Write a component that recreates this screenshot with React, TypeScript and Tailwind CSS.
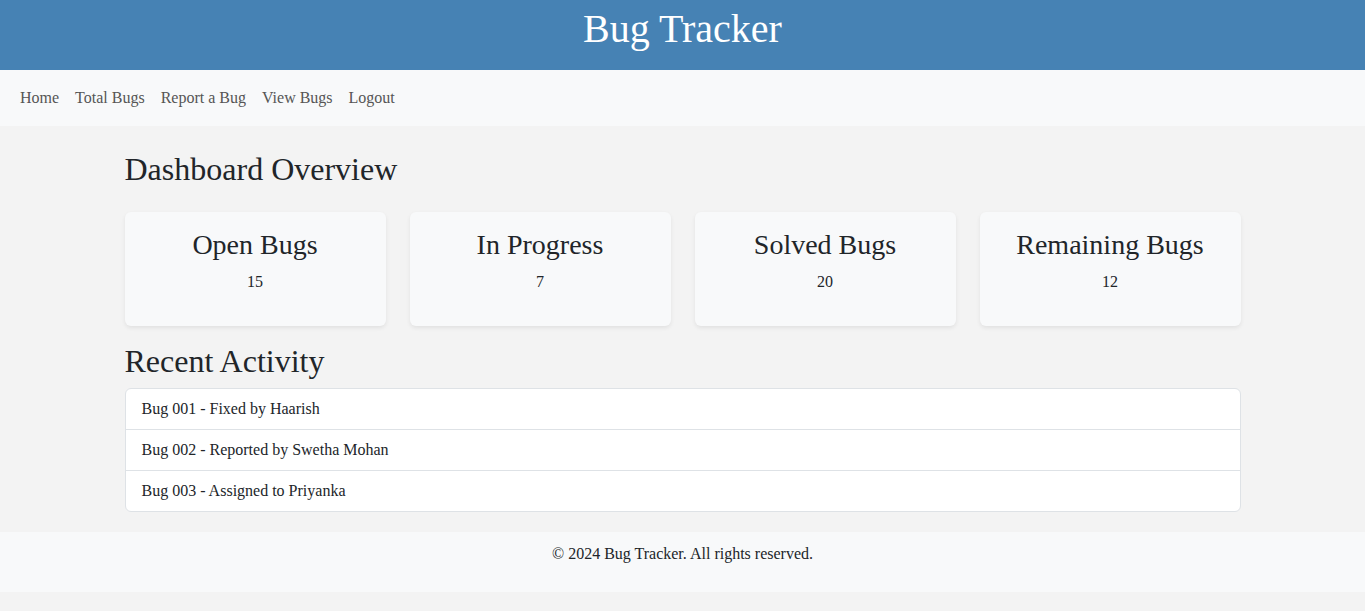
import React from "react";

const serif = { fontFamily: '"Liberation Serif", "Times New Roman", serif' };

export default function App() {
  const stats = [
    { title: "Open Bugs", value: 15 },
    { title: "In Progress", value: 7 },
    { title: "Solved Bugs", value: 20 },
    { title: "Remaining Bugs", value: 12 },
  ];
  const activity = [
    "Bug 001 - Fixed by Haarish",
    "Bug 002 - Reported by Swetha Mohan",
    "Bug 003 - Assigned to Priyanka",
  ];
  return (
    <div className="min-h-[611px] bg-[#f3f3f3] text-[#212529] font-['Liberation_Serif',serif]" style={serif}>
      <header className="h-[70px] bg-[#4682b4] pt-[5px] text-center">
        <h1 className="m-0 text-[40px] leading-[48px] font-normal text-white">Bug Tracker</h1>
      </header>
      <nav className="h-[56px] bg-[#f8f9fa] px-[12px] py-[8px] flex items-center">
        {["Home", "Total Bugs", "Report a Bug", "View Bugs", "Logout"].map((l) => (
          <a key={l} className="px-[8px] py-[8px] text-[16px] leading-[24px] text-[#555555]">
            {l}
          </a>
        ))}
      </nav>
      <main className="mx-auto w-[1140px] px-[12px] pt-[24px]">
        <h2 className="text-[32px] leading-[38.4px] font-normal">Dashboard Overview</h2>
        <div className="mt-[24px] grid grid-cols-4 gap-[24px]">
          {stats.map((s) => (
            <div key={s.title} className="rounded-[6px] bg-[#f8f9fa] p-[16px] text-center shadow-[0_2px_4px_rgba(0,0,0,0.075)]">
              <h3 className="text-[28px] leading-[33.6px] font-normal mb-[8px]">{s.title}</h3>
              <p className="text-[16px] leading-[24px] mb-[16px]">{s.value}</p>
            </div>
          ))}
        </div>
        <h2 className="mt-[16px] text-[32px] leading-[38.4px] font-normal mb-[8px]">Recent Activity</h2>
        <ul className="rounded-[6px] border border-[#dee2e6] bg-white">
          {activity.map((a, i) => (
            <li
              key={a}
              className={`px-[16px] py-[8px] text-[16px] leading-[24px] ${i > 0 ? "border-t border-[#dee2e6]" : ""}`}
            >
              {a}
            </li>
          ))}
        </ul>
      </main>
      <footer className="mt-[20px] h-[60px] bg-[#f8f9fa] pt-[10px] text-center">
        <p className="text-[16px] leading-[24px]">© 2024 Bug Tracker. All rights reserved.</p>
      </footer>
    </div>
  );
}
